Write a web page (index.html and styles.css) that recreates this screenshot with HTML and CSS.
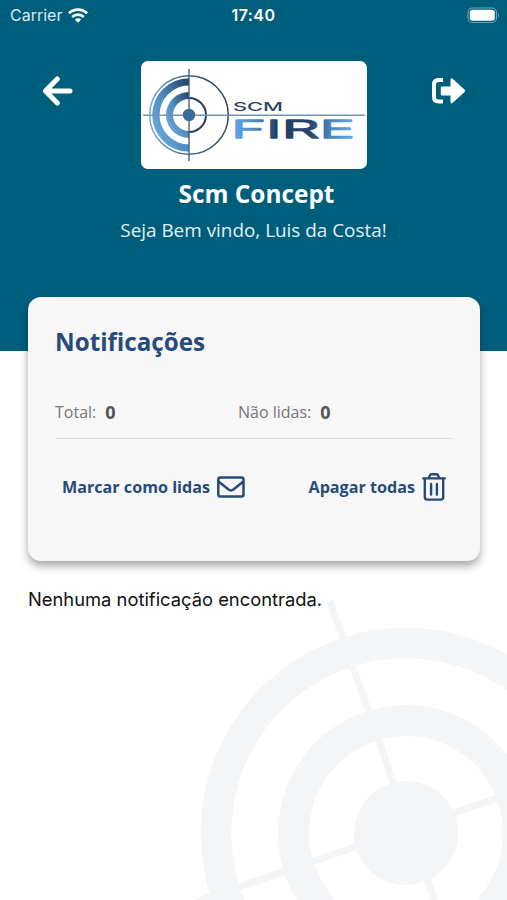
FILE: index.html
```html
<!DOCTYPE html>
<html lang="pt">
<head>
  <meta charset="UTF-8">
  <meta name="viewport" content="width=device-width, initial-scale=1.0">
  <title>Notificações</title>
  <link rel="stylesheet" href="styles.css">
</head>
<body>
  <div class="screen">
    <svg class="watermark" width="312" height="304" viewBox="195 596 312 304">
      <g fill="none" stroke="#f3f5f7">
        <circle cx="406" cy="833" r="190" stroke-width="30.5"/>
        <circle cx="406" cy="833" r="112.5" stroke-width="31"/>
        <path d="M330 601 L437 907 M188 904.5 L507 794.5" stroke-width="7"/>
      </g>
      <circle cx="406" cy="833" r="52" fill="#f3f5f7"/>
    </svg>

    <header class="header">
      <div class="status-bar">
        <div class="carrier">
          <span>Carrier</span>
          <svg width="20" height="15" viewBox="0 0 20 15">
            <g fill="none" stroke="#fff" stroke-width="2.7">
              <path d="M1 5.3 C6 .4 14 .4 19 5.3"/>
              <path d="M4.2 8.9 C7.6 5.8 12.4 5.8 15.8 8.9"/>
            </g>
            <path d="M6.8 11.6 C8.6 9.9 11.4 9.9 13.2 11.6 L10 14.8Z" fill="#fff"/>
          </svg>
        </div>
        <div class="time">17:40</div>
        <div class="battery">
          <svg width="33" height="17" viewBox="0 0 33 17">
            <rect x="1" y="1" width="28.5" height="14.5" rx="4.5" fill="none" stroke="#6fa3b8" stroke-width="1.1"/>
            <rect x="2.8" y="2.8" width="25" height="11" rx="2.8" fill="#fff"/>
            <path d="M31 6 Q33 8.2 31 10.5Z" fill="#6fa3b8"/>
          </svg>
        </div>
      </div>

      <div class="top-row">
        <button class="icon-button" aria-label="Voltar">
          <svg width="32" height="30" viewBox="0 0 32 30">
            <path d="M15.3 3 L3.5 15 L15.3 27 M4 15 H28" fill="none" stroke="#fff" stroke-width="5" stroke-linecap="round" stroke-linejoin="round"/>
          </svg>
        </button>

        <div class="logo">
          <svg width="226" height="108" viewBox="0 0 226 108">
            <defs>
              <linearGradient id="ring" x1="0" y1="1" x2="1" y2="0">
                <stop offset="0" stop-color="#72b3e6"/>
                <stop offset=".5" stop-color="#4f8dc2"/>
                <stop offset="1" stop-color="#22405f"/>
              </linearGradient>
              <linearGradient id="thin" x1="0" y1="0" x2="1" y2="0">
                <stop offset="0" stop-color="#6fa3cd"/>
                <stop offset=".6" stop-color="#39577b"/>
                <stop offset="1" stop-color="#293c5c"/>
              </linearGradient>
              <linearGradient id="word" x1="0" y1="0" x2="1" y2="0">
                <stop offset="0" stop-color="#61aaf5"/>
                <stop offset=".24" stop-color="#4b7eae"/>
                <stop offset=".36" stop-color="#223f61"/>
                <stop offset=".64" stop-color="#27466b"/>
                <stop offset=".8" stop-color="#4b84ba"/>
                <stop offset="1" stop-color="#61aaf5"/>
              </linearGradient>
            </defs>
            <circle cx="48" cy="54" r="39.3" fill="none" stroke="url(#thin)" stroke-width="1.4"/>
            <path d="M48 17.2 A36.8 36.8 0 0 0 48 90.8 V83.5 A29.5 29.5 0 0 1 48 24.5Z" fill="url(#ring)"/>
            <path d="M48 31 A23 23 0 0 0 48 77 V70 A16 16 0 0 1 48 38Z" fill="url(#ring)"/>
            <path d="M48 37 A17 17 0 0 1 48 71" fill="none" stroke="#293f60" stroke-width="2"/>
            <path d="M48 8 V100" stroke="#44617f" stroke-width="1.4"/>
            <path d="M2 54.3 H224" stroke="#6f93b5" stroke-width="1.4"/>
            <circle cx="48" cy="54" r="6.2" fill="#3d6b98"/>
            <text class="logo-small" x="92" y="49.5" textLength="50" lengthAdjust="spacingAndGlyphs" fill="#2d4263">SCM</text>
            <text class="logo-big" x="90" y="77" textLength="124" lengthAdjust="spacingAndGlyphs" fill="url(#word)" stroke="url(#word)">FIRE</text>
          </svg>
        </div>

        <button class="icon-button" aria-label="Sair">
          <svg width="36" height="28" viewBox="0 0 36 28">
            <path d="M13 3 H8.5 Q4 3 4 7.5 V20 Q4 24.5 8.5 24.5 H13" fill="none" stroke="#fff" stroke-width="4"/>
            <path d="M12 9.5 H20.5 V3 Q20.5 .2 22.9 2 L34.5 12.6 Q35.7 13.8 34.5 15 L22.9 25.8 Q20.5 27.4 20.5 24.6 V18.5 H12 Q10.8 18.5 10.8 17.2 V10.8 Q10.8 9.5 12 9.5Z" fill="#fff"/>
          </svg>
        </button>
      </div>

      <h1 class="company">Scm Concept</h1>
      <p class="welcome">Seja Bem vindo, Luis da Costa!</p>
    </header>

    <main class="content">
      <section class="card">
        <h2>Notificações</h2>
        <div class="counters">
          <div class="counter"><span>Total:</span><strong>0</strong></div>
          <div class="counter"><span>Não lidas:</span><strong>0</strong></div>
        </div>
        <div class="actions">
          <button class="action">
            <span>Marcar como lidas</span>
            <svg width="28" height="22" viewBox="0 0 28 22">
              <g fill="none" stroke="#274b78" stroke-width="2.5" stroke-linejoin="round">
                <rect x="1.3" y="1.6" width="25.2" height="18.8" rx="2"/>
                <path d="M1.5 5.6 L11.6 13.6 Q14 15.3 16.4 13.6 L26.4 5.6"/>
              </g>
            </svg>
          </button>
          <button class="action">
            <span>Apagar todas</span>
            <svg width="24" height="28" viewBox="0 0 24 28">
              <g fill="none" stroke="#274b78" stroke-width="2.4" stroke-linecap="round" stroke-linejoin="round">
                <path d="M1.3 5.4 H22.7 M6.6 5 L8.2 2 Q8.6 1.3 9.5 1.3 H14.5 Q15.4 1.3 15.8 2 L17.4 5"/>
                <path d="M2.8 5.6 V24 Q2.8 26.6 5.2 26.6 H18.8 Q21.2 26.6 21.2 24 V5.6"/>
                <path d="M9.1 11 V21.6 M14.9 11 V21.6"/>
              </g>
            </svg>
          </button>
        </div>
      </section>
      <p class="empty">Nenhuma notificação encontrada.</p>
    </main>
  </div>
</body>
</html>
```
FILE: styles.css
```css
* {
  box-sizing: border-box;
}

body {
  margin: 0;
  background-color: #fff;
  font-family: "Open Sans", "Noto Sans", sans-serif;
}

button {
  padding: 0;
  border: none;
  background: none;
  font-family: inherit;
  cursor: pointer;
}

svg {
  display: block;
}

.screen {
  position: relative;
  width: 507px;
  height: 900px;
  overflow: hidden;
}

/* Target drawing behind the list */
.watermark {
  position: absolute;
  right: 0;
  bottom: 0;
}

/* Header */
.header {
  height: 351px;
  background-color: #005e7d;
  color: #fff;
  text-align: center;
}

.status-bar {
  display: grid;
  grid-template-columns: 1fr auto 1fr;
  align-items: center;
  height: 30px;
  padding: 0 7px 0 10px;
  font-family: Inter, sans-serif;
  font-size: 16px;
}

.carrier {
  display: flex;
  align-items: center;
  gap: 6px;
  color: #d9e8ee;
}

.time {
  padding-right: 3px;
  font-weight: 600;
  letter-spacing: 0.4px;
}

.battery {
  justify-self: end;
}

.top-row {
  display: flex;
  justify-content: space-between;
  padding: 31px 41px 0 42px;
}

.top-row .icon-button {
  width: 36px;
  height: 60px;
}

.logo {
  width: 226px;
  height: 108px;
  border-radius: 7px;
  background-color: #fff;
}

.logo-small,
.logo-big {
  font-family: Inter, sans-serif;
  font-weight: 500;
  font-size: 11.5px;
}

.logo-big {
  font-weight: 300;
  font-size: 24px;
  stroke-width: 1.3px;
  stroke-linejoin: round;
}

.company {
  margin: 8px 0 0 6px;
  font-size: 24.4px;
  line-height: 34px;
}

.welcome {
  margin: 6px 0 0;
  font-size: 18.9px;
  line-height: 26px;
  color: #e3eff3;
}

/* Notification card */
.content {
  position: relative;
  margin-top: -54px;
  padding: 0 27px 0 28px;
}

.card {
  height: 264px;
  padding: 27px 27px 0;
  border-radius: 13px;
  background-color: #f7f7f7;
  box-shadow: 0 5px 8px rgba(0, 0, 0, 0.34);
}

.card h2 {
  margin: 0;
  font-size: 24.2px;
  line-height: 36px;
  color: #274b78;
}

.counters {
  display: grid;
  grid-template-columns: 183px 1fr;
  margin-top: 37px;
  padding-bottom: 12px;
  border-bottom: 1px solid #dedede;
}

.counter {
  display: flex;
  align-items: center;
  gap: 9px;
  height: 29px;
  font-size: 16px;
  color: #777;
}

.counter strong {
  font-size: 18px;
  color: #555;
}

.actions {
  display: flex;
  justify-content: space-between;
  margin-top: 34px;
  padding: 0 7px;
}

.action {
  display: flex;
  align-items: center;
  gap: 7px;
  height: 28px;
  font-size: 16.15px;
  font-weight: 700;
  color: #274b78;
}

.empty {
  margin: 25px 0 0;
  font-family: Inter, sans-serif;
  font-size: 18.35px;
  line-height: 26px;
  color: #111;
}
```
